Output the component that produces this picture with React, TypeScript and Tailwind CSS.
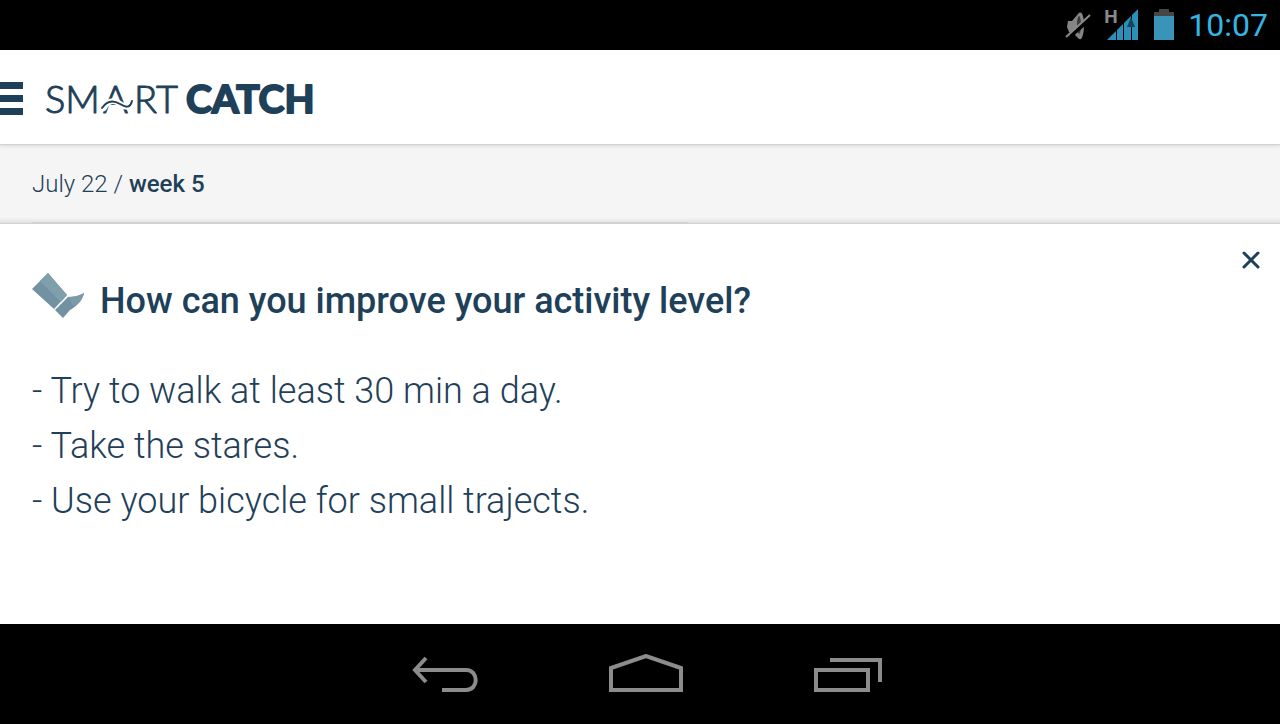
import React from "react";

const tips: string[] = [
  "Try to walk at least 30 min a day.",
  "Take the stares.",
  "Use your bicycle for small trajects.",
];

function StatusBar() {
  return (
    <div className="flex h-[50px] shrink-0 items-center justify-end bg-black pr-3">
      <svg className="mr-3 h-[50px] w-7" viewBox="0 0 28 50" aria-label="Muted" role="img">
        <path d="M4 21h4l6-7c4-5 6 3 6 11s-2 18-6 13l-6-6H5l-2-5z" fill="#858585" />
        <ellipse cx="15" cy="25" rx="2" ry="9" fill="#3a3a3a" />
        <path d="M3 39 28 17" stroke="#000" strokeWidth="4" />
        <path d="M2 37 26 15" stroke="#8a8a8a" strokeWidth="2" />
      </svg>
      <div className="relative mr-4 h-[50px] w-[34px]">
        <span className="absolute top-[7px] left-0 font-[Roboto] text-[19px] leading-5 font-bold text-[#8a8a8a]">
          H
        </span>
        <svg className="h-[50px] w-[34px]" viewBox="0 0 34 50" aria-label="Signal" role="img">
          <path d="M3 40 34 9V40z" fill="#2b8fb7" />
          <path d="M12.500 28v13M19.500 20v21M27.500 15v26" stroke="#000" strokeWidth="1" />
          <path d="m27 17 4 10h-8z" fill="#14475b" />
        </svg>
      </div>
      <svg className="mr-[14px] h-[50px] w-5" viewBox="0 0 20 50" aria-label="Battery" role="img">
        <path d="M5 9h10v3h5v5H0v-5h5z" fill="#464646" />
        <path d="M0 16h20v24H0z" fill="#3a94b9" />
      </svg>
      <time className="font-[Roboto] text-[32px] leading-10 text-[#33b5e5]">10:07</time>
    </div>
  );
}

function Logo() {
  return (
    <a href="#" aria-label="Smartcatch">
      <svg
        className="h-14 w-[280px] overflow-visible font-[Lato] text-[38px]"
        viewBox="0 0 280 56"
        fill="#1f4059"
        stroke="#1f4059"
        strokeLinejoin="round"
      >
        <g strokeWidth="1" className="font-light">
          <text x="-2" y="42">SM</text>
          <text x="56" y="42">A</text>
          <text x="87" y="42">RT</text>
        </g>
        <g fill="none" strokeLinecap="round">
          <path d="M57 37C62 27 69 30 73 33s10 5 12-3" stroke="#fff" strokeWidth="6" />
          <path d="M55 37C61 28 68 30 73 33s10 5 12-3" strokeWidth="2" />
        </g>
        <text x="139" y="42" strokeWidth="2" className="text-[39px] font-bold">CATCH</text>
      </svg>
    </a>
  );
}

function Header() {
  return (
    <header className="relative flex h-[95px] shrink-0 items-center gap-6 border-b border-[#d2d2d2] bg-white pt-1 shadow-[0_1px_4px_rgba(0,0,0,0.12)]">
      <button type="button" aria-label="Open menu" className="mb-[2px] flex w-[23px] flex-col gap-[6px]">
        <span className="h-[7px] bg-[#1f4059]" />
        <span className="h-[7px] bg-[#1f4059]" />
        <span className="h-[7px] bg-[#1f4059]" />
      </button>
      <Logo />
    </header>
  );
}

function NavigationBar() {
  return (
    <nav className="flex h-[100px] shrink-0 items-center justify-center gap-[131px] bg-black pl-[14px]">
      <button type="button" aria-label="Back">
        <svg className="h-10 w-[66px]" viewBox="0 0 66 40" fill="none" stroke="#8c8c8c" strokeWidth="4">
          <path d="M14 4 3 16l11 12M3 16h51c13 0 13 20 0 20H30" />
        </svg>
      </button>
      <button type="button" aria-label="Home">
        <svg className="h-10 w-[74px]" viewBox="0 0 74 40" fill="none" stroke="#8c8c8c" strokeWidth="4">
          <path d="M2 36V14L37 2l35 12v22z" />
        </svg>
      </button>
      <button type="button" aria-label="Recent apps">
        <svg className="h-10 w-[68px]" viewBox="0 0 68 40" fill="none" stroke="#8c8c8c" strokeWidth="4">
          <path d="M2 16h52v20H2zM16 6h50v22" />
        </svg>
      </button>
    </nav>
  );
}

export default function App() {
  return (
    <div className="flex min-h-screen flex-col bg-white font-[Roboto,sans-serif] text-[#1f4059]">
      <StatusBar />
      <Header />
      <div className="flex h-[79px] shrink-0 flex-col justify-between border-b border-[#d2d2d2] bg-[#f5f5f5] px-8 shadow-[inset_0_-5px_4px_-3px_rgba(0,0,0,0.10)]">
        <p className="pt-[23px] text-2xl leading-8 font-light">
          July 22 / <strong className="font-medium">week 5</strong>
        </p>
        <div className="h-px w-[656px] max-w-full bg-[#d2d2d2]" />
      </div>
      <main className="relative flex-1 px-8 pt-12">
        <button type="button" aria-label="Close" className="absolute top-[27px] right-5">
          <svg className="h-[18px] w-[18px]" viewBox="0 0 18 18" stroke="#1f4059" strokeWidth="3" strokeLinecap="round">
            <path d="m2 2 14 14M16 2 2 16" />
          </svg>
        </button>
        <div className="flex items-start gap-4">
          <svg className="h-12 w-[52px]" viewBox="0 0 52 48" aria-hidden="true">
            <path d="M0 17 16 1 35 23 22 37z" fill="#7292a3" />
            <path d="m8 9 8-8 19 22-6 7z" fill="#809fad" />
            <path d="M23 38 36 25c6 0 10-1 16-4-1 7-7 13-14 17l-7 8z" fill="#7292a3" />
            <path d="M36 25c6 0 10-1 16-4-1 5-5 10-10 14z" fill="#7c9baa" />
          </svg>
          <h1 className="pt-[5px] text-4xl leading-[48px] font-medium">
            How can you improve your activity level?
          </h1>
        </div>
        <ul className="pt-[39px] text-4xl leading-[55px] font-light">
          {tips.map((tip) => (
            <li key={tip}>- {tip}</li>
          ))}
        </ul>
      </main>
      <NavigationBar />
    </div>
  );
}
